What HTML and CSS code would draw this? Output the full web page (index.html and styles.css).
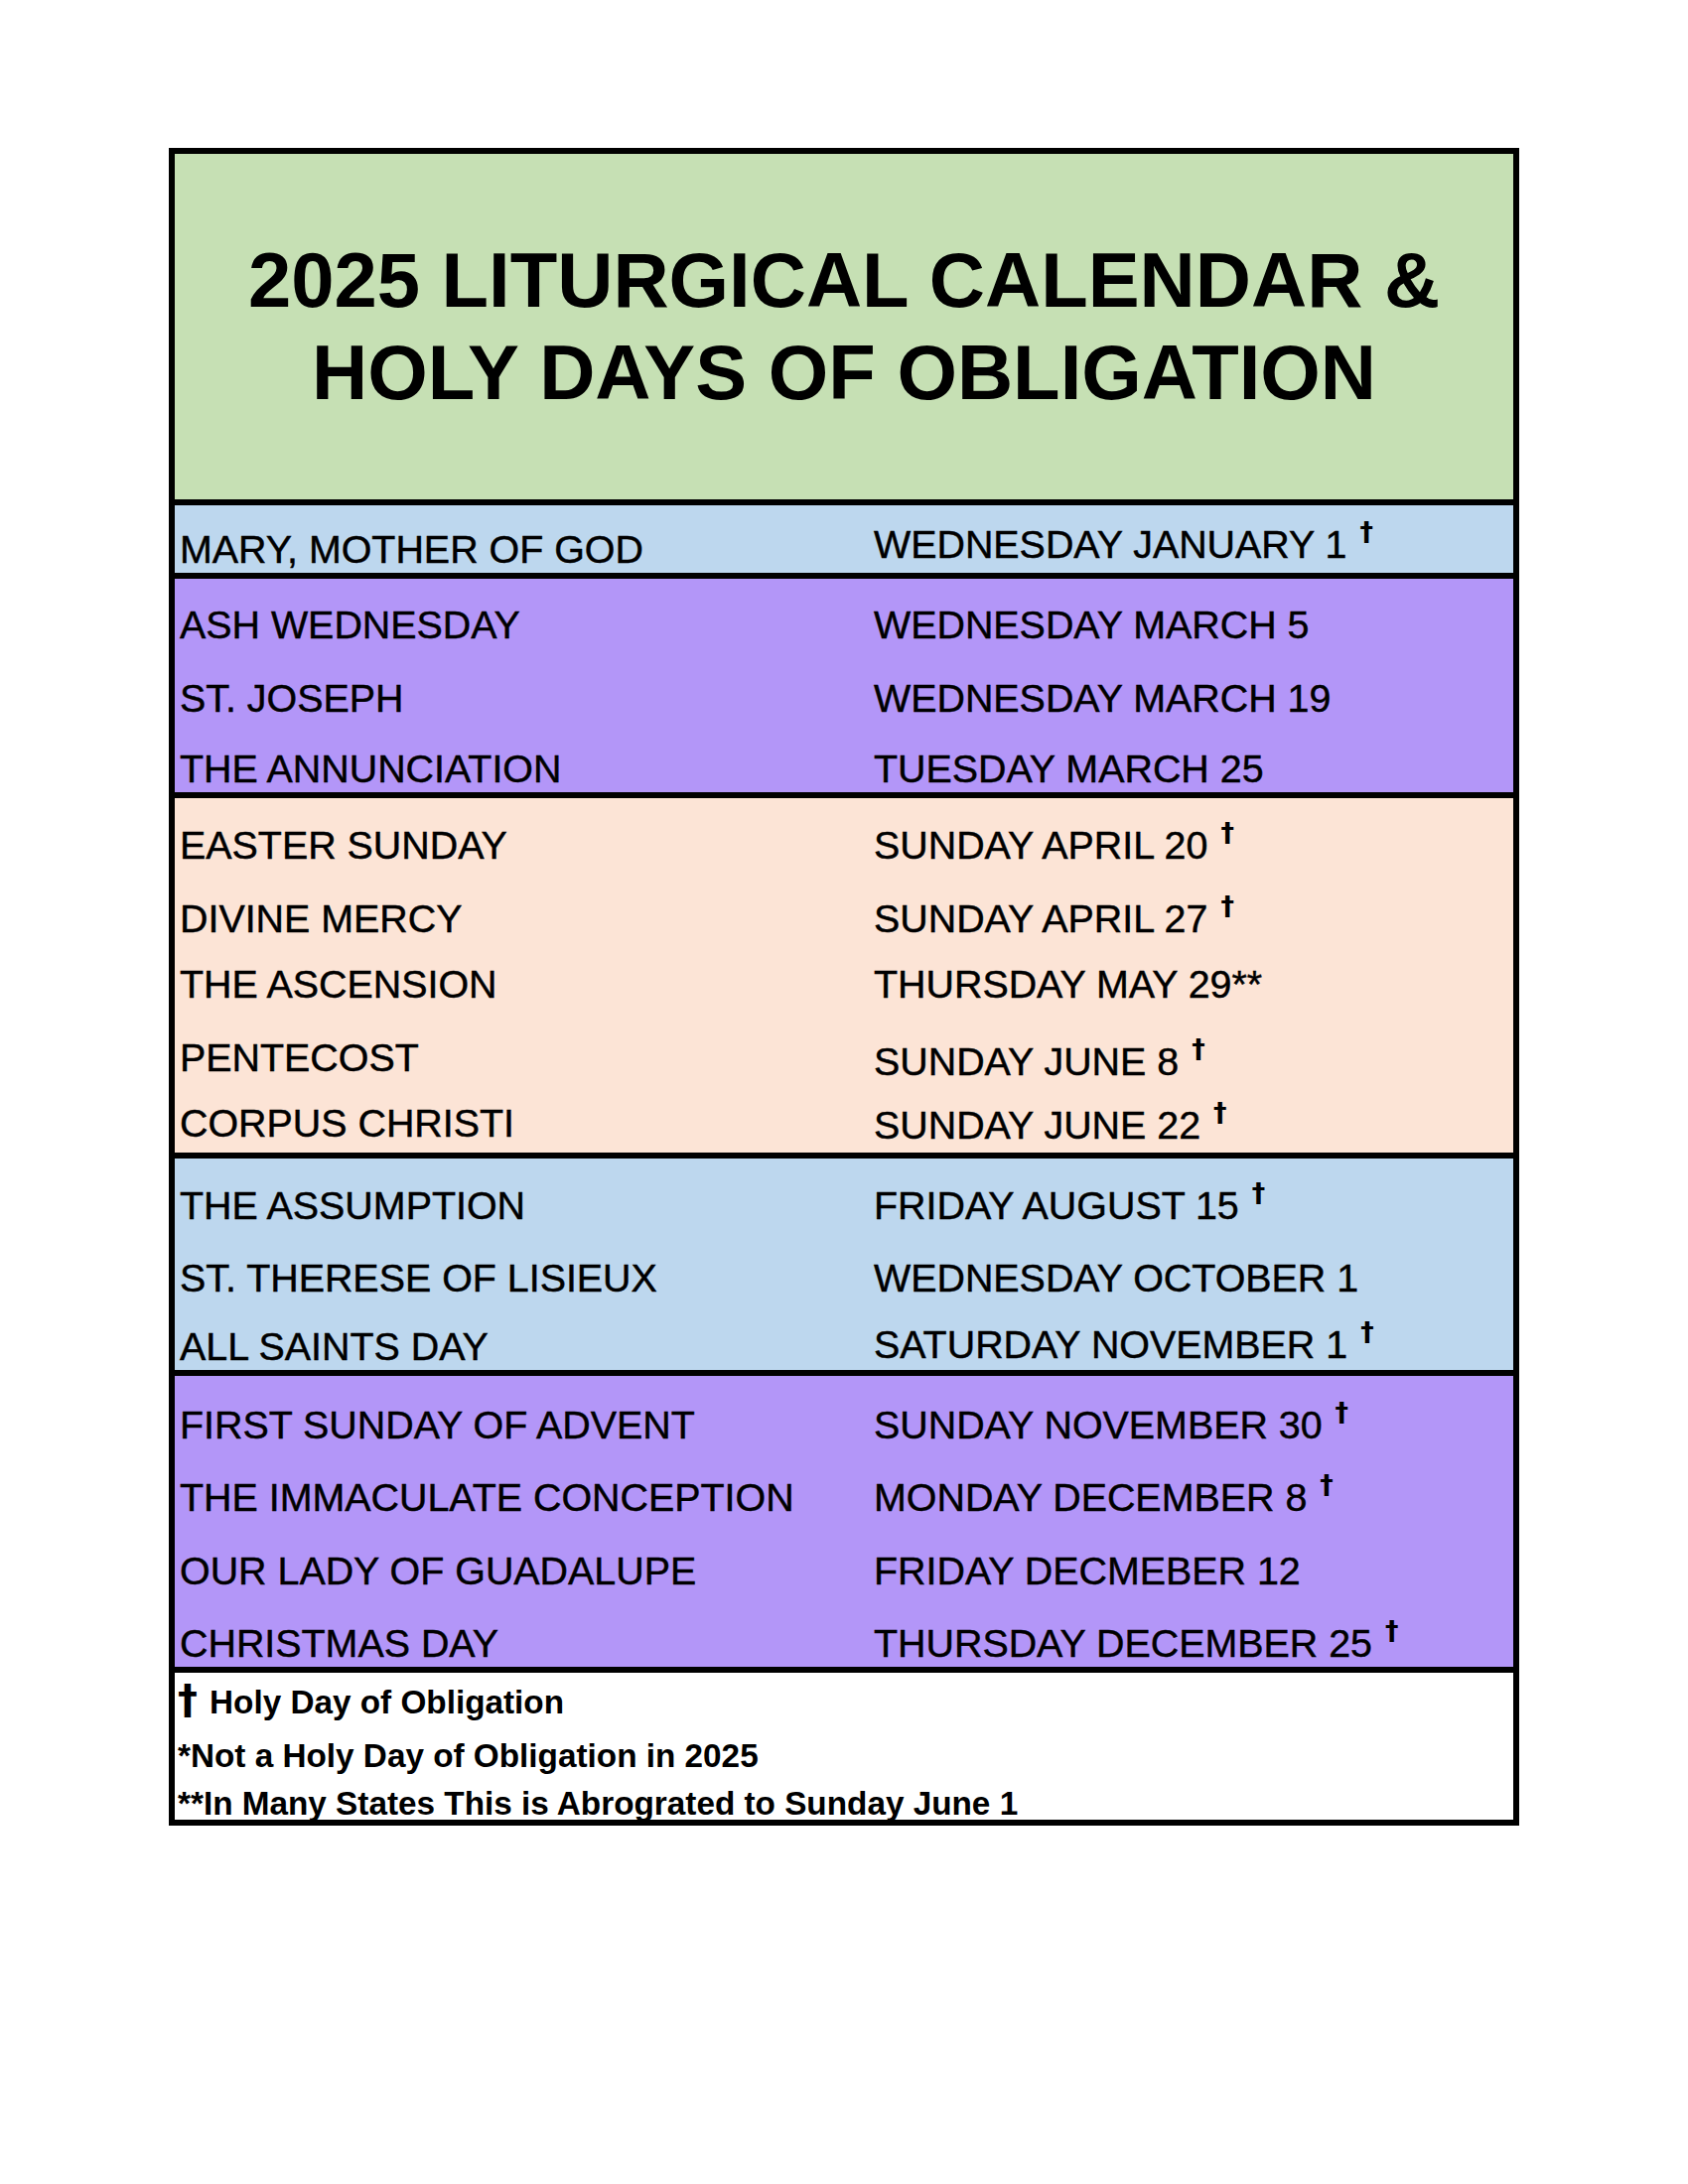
FILE: index.html
```html
<!DOCTYPE html>
<html lang="en">
<head>
<meta charset="utf-8">
<title>2025 Liturgical Calendar &amp; Holy Days of Obligation</title>
<link rel="stylesheet" href="styles.css">
</head>
<body>
<main class="sheet">
  <header class="title-block">
    <h1 class="title">2025 LITURGICAL CALENDAR &amp;<br>HOLY DAYS OF OBLIGATION</h1>
  </header>

  <section class="group blue g-jan">
    <div class="feast">MARY, MOTHER OF GOD</div>
    <div class="date raise">WEDNESDAY JANUARY 1 <span class="dag">†</span></div>
  </section>

  <section class="group purple g-lent">
    <div class="feast">ASH WEDNESDAY</div>
    <div class="date">WEDNESDAY MARCH 5</div>
    <div class="feast">ST. JOSEPH</div>
    <div class="date">WEDNESDAY MARCH 19</div>
    <div class="feast">THE ANNUNCIATION</div>
    <div class="date">TUESDAY MARCH 25</div>
  </section>

  <section class="group peach g-easter">
    <div class="feast">EASTER SUNDAY</div>
    <div class="date">SUNDAY APRIL 20 <span class="dag">†</span></div>
    <div class="feast">DIVINE MERCY</div>
    <div class="date">SUNDAY APRIL 27 <span class="dag">†</span></div>
    <div class="feast">THE ASCENSION</div>
    <div class="date">THURSDAY MAY 29**</div>
    <div class="feast">PENTECOST</div>
    <div class="date lower">SUNDAY JUNE 8 <span class="dag">†</span></div>
    <div class="feast raise-more">CORPUS CHRISTI</div>
    <div class="date raise-some">SUNDAY JUNE 22 <span class="dag">†</span></div>
  </section>

  <section class="group blue g-summer">
    <div class="feast">THE ASSUMPTION</div>
    <div class="date">FRIDAY AUGUST 15 <span class="dag">†</span></div>
    <div class="feast">ST. THERESE OF LISIEUX</div>
    <div class="date">WEDNESDAY OCTOBER 1</div>
    <div class="feast">ALL SAINTS DAY</div>
    <div class="date raise-bit">SATURDAY NOVEMBER 1 <span class="dag">†</span></div>
  </section>

  <section class="group purple g-advent">
    <div class="feast">FIRST SUNDAY OF ADVENT</div>
    <div class="date">SUNDAY NOVEMBER 30 <span class="dag">†</span></div>
    <div class="feast">THE IMMACULATE CONCEPTION</div>
    <div class="date">MONDAY DECEMBER 8 <span class="dag">†</span></div>
    <div class="feast">OUR LADY OF GUADALUPE</div>
    <div class="date">FRIDAY DECMEBER 12</div>
    <div class="feast">CHRISTMAS DAY</div>
    <div class="date">THURSDAY DECEMBER 25 <span class="dag">†</span></div>
  </section>

  <footer class="notes">
    <p class="note note-first"><span class="note-dag">†</span>Holy Day of Obligation</p>
    <p class="note note-second">*Not a Holy Day of Obligation in 2025</p>
    <p class="note">**In Many States This is Abrograted to Sunday June 1</p>
  </footer>
</main>
</body>
</html>
```

FILE: styles.css
```css
html, body {
  margin: 0;
  padding: 0;
  background: #ffffff;
}

body {
  font-family: "Liberation Sans", Arial, sans-serif;
  color: #000000;
}

.sheet {
  width: 1360px;
  box-sizing: border-box;
  margin: 149px auto 0;
  border: 6px solid #000000;
  display: flex;
  flex-direction: column;
}

/* Title */
.title-block {
  height: 348px;
  background: #c6e0b4;
  display: flex;
  align-items: center;
  justify-content: center;
}

.title {
  margin: 0;
  font-size: 77.8px;
  line-height: 93px;
  font-weight: 700;
  text-align: center;
}

/* Groups of rows */
.group {
  border-top: 6px solid #000000;
  display: grid;
  grid-template-columns: 703px 1fr;
}

.blue { background: #bdd7ee; }
.purple { background: #b396f8; }
.peach { background: #fce4d6; }

.g-jan { grid-template-rows: 68px; }
.g-lent { grid-template-rows: 70px 74px 71px; }
.g-easter { grid-template-rows: 71px 74px 66px 74px 72px; }
.g-summer { grid-template-rows: 71px 73px 69px; }
.g-advent { grid-template-rows: 73px 73px 74px 73px; }

.feast,
.date {
  align-self: end;
  font-size: 39.4px;
  line-height: 39px;
  padding-bottom: 4px;
  white-space: nowrap;
  -webkit-text-stroke: 0.45px #000000;
}

.feast { padding-left: 5px; }
.date { padding-left: 1px; }

.raise { padding-bottom: 9px; }
.raise-some { padding-bottom: 8px; }
.raise-bit { padding-bottom: 6px; }
.raise-more { padding-bottom: 10px; }
.lower { padding-bottom: 0; }

.dag {
  font-family: "DejaVu Sans", "Liberation Sans", sans-serif;
  font-size: 27px;
  font-weight: 700;
  line-height: 0;
  vertical-align: 17px;
  margin-left: 2px;
  -webkit-text-stroke: 0;
}

/* Footnotes */
.notes {
  border-top: 6px solid #000000;
  background: #ffffff;
  padding: 11px 4px 0 3px;
  display: flex;
  flex-direction: column;
}

.note {
  margin: 0;
  font-size: 33.3px;
  line-height: 33px;
  font-weight: 700;
  white-space: nowrap;
}

.note-first { margin-bottom: 21px; }
.note-second { margin-bottom: 15px; }

.note-dag {
  display: inline-block;
  width: 32px;
  font-family: "DejaVu Sans", "Liberation Sans", sans-serif;
  font-size: 40px;
  line-height: 33px;
}
```
